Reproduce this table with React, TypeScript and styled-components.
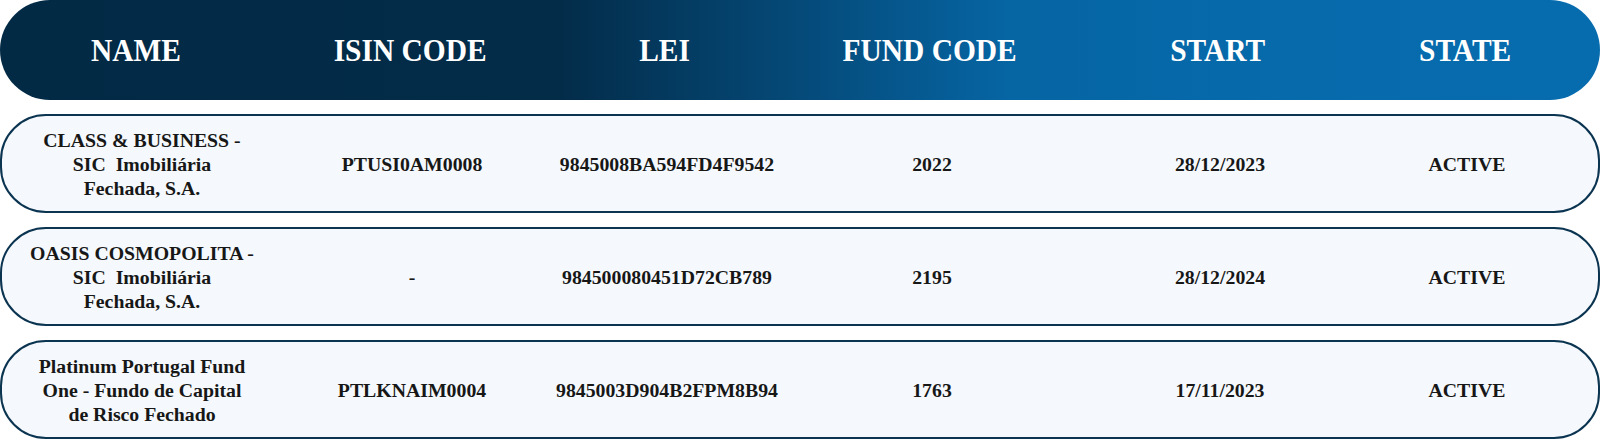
import React from 'react';
import styled, { createGlobalStyle } from 'styled-components';

const GlobalStyle = createGlobalStyle`
  html, body {
    margin: 0;
    padding: 0;
    background: #ffffff;
  }
  body {
    font-family: "Liberation Serif", "DejaVu Serif", serif;
  }
`;

const COLUMNS = '280px 260px 250px 280px 296px 198px';

const FundsTable = styled.div`
  width: 1600px;
  display: flex;
  flex-direction: column;
  gap: 14px;
`;

const HeaderBar = styled.div`
  height: 100px;
  display: grid;
  grid-template-columns: ${COLUMNS};
  align-items: center;
  border-radius: 50px;
  background: linear-gradient(
    90deg,
    #022a45 0%,
    #032c49 35%,
    #054a79 50%,
    #0665a3 63%,
    #066aab 80%,
    #076cae 100%
  );
`;

const HeaderCell = styled.div<{ $shift?: number }>`
  text-align: center;
  color: #ffffff;
  font-size: 32px;
  font-weight: 700;
  white-space: nowrap;
  padding-right: ${({ $shift }) => ($shift ? `${$shift}px` : '0')};

  span {
    display: inline-block;
    transform: scaleX(0.92);
  }
`;

const Row = styled.div`
  box-sizing: border-box;
  height: 99px;
  display: grid;
  grid-template-columns: ${COLUMNS};
  align-items: center;
  border: 2px solid #0b3451;
  border-radius: 46px;
  background: #f5f9fd;
`;

const Cell = styled.div`
  text-align: center;
  color: #171717;
  font-size: 19.8px;
  font-weight: 700;
  line-height: 24px;
  white-space: nowrap;
`;

type Fund = {
  name: string[];
  isin: string;
  lei: string;
  code: string;
  start: string;
  state: string;
};

const headers = ['NAME', 'ISIN CODE', 'LEI', 'FUND CODE', 'START', 'STATE'];

const funds: Fund[] = [
  {
    name: ['CLASS & BUSINESS -', 'SIC\u00a0 Imobiliária', 'Fechada, S.A.'],
    isin: 'PTUSI0AM0008',
    lei: '9845008BA594FD4F9542',
    code: '2022',
    start: '28/12/2023',
    state: 'ACTIVE',
  },
  {
    name: ['OASIS COSMOPOLITA -', 'SIC\u00a0 Imobiliária', 'Fechada, S.A.'],
    isin: '-',
    lei: '984500080451D72CB789',
    code: '2195',
    start: '28/12/2024',
    state: 'ACTIVE',
  },
  {
    name: ['Platinum Portugal Fund', 'One - Fundo de Capital', 'de Risco Fechado'],
    isin: 'PTLKNAIM0004',
    lei: '9845003D904B2FPM8B94',
    code: '1763',
    start: '17/11/2023',
    state: 'ACTIVE',
  },
];

const App: React.FC = () => {
  return (
    <>
      <GlobalStyle />
      <FundsTable>
        <HeaderBar>
          {headers.map((h, i) => (
            <HeaderCell key={h} $shift={i === 0 ? 8 : 0}>
              <span>{h}</span>
            </HeaderCell>
          ))}
        </HeaderBar>
        {funds.map((f) => (
          <Row key={f.lei}>
            <Cell>
              {f.name.map((line, i) => (
                <div key={i}>{line}</div>
              ))}
            </Cell>
            <Cell>{f.isin}</Cell>
            <Cell>{f.lei}</Cell>
            <Cell>{f.code}</Cell>
            <Cell>{f.start}</Cell>
            <Cell>{f.state}</Cell>
          </Row>
        ))}
      </FundsTable>
    </>
  );
};

export default App;
